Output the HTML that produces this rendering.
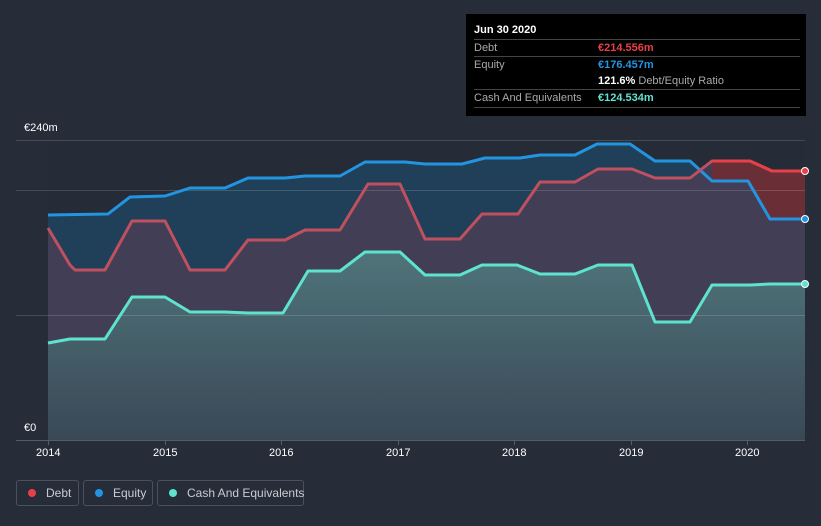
<!DOCTYPE html><html><head><meta charset="utf-8"><style>
body{margin:0;width:821px;height:526px;background:#262c38;font-family:"Liberation Sans",sans-serif;overflow:hidden;position:relative}
.tt{position:absolute;left:466px;top:14px;width:340px;height:102px;background:#000;color:#fff;font-size:11px}
.tt .r{position:absolute;left:8px;right:6px;border-top:1px solid #444;height:17px;line-height:17px;color:#aaa}
.tt .v{position:absolute;left:124px;font-weight:bold}
.lg{position:absolute;top:480px;height:26px;border:1px solid #4a505c;border-radius:3px;color:#c8ccd2;font-size:12px;line-height:24px;box-sizing:border-box;white-space:nowrap}
.lg i{display:inline-block;width:8px;height:8px;border-radius:50%;margin:0 10px 0 11px}
.ax{position:absolute;color:#fff;font-size:11px}
</style></head><body>
<svg width="821" height="526" style="position:absolute;left:0;top:0">
<defs><linearGradient id="cg" x1="0" y1="0" x2="0" y2="1"><stop offset="0" stop-color="#4f747a"/><stop offset="1" stop-color="#3a4856"/></linearGradient></defs>
<rect x="48" y="140" width="757" height="300" fill="#252b37"/>
<path d="M48,215 L108,214 130,197 165,196 190,188 225,188 248,178 285,178 305,176 340,176 365,162 405,162 425,164 462,164 485,158 520,158 540,155 575,155 597,144 630,144 655,161 690,161 712,181 748,181 770,219 805,219 L805,440 48,440Z" fill="#1f4058"/>
<path d="M48,228 L70,265 75,270 105,270 132,221 165,221 190,270 225,270 248,240 285,240 305,230 340,230 368,184 400,184 425,239 460,239 482,214 518,214 540,182 575,182 598,169 632,169 655,178 690,178 712,161 750,161 772,171 805,171 L805,440 48,440Z" fill="#463e55" opacity="0.9"/>
<path d="M712,161 750,161 772,171 805,171 805,219 770,219 748,181 712,181Z" fill="#6a2e36"/>
<path d="M48,343 L70,339 105,339 132,297 165,297 190,312 225,312 248,313 283,313 308,271 340,271 365,252 400,252 425,275 460,275 482,265 517,265 540,274 575,274 598,265 632,265 655,322 690,322 712,285 750,285 770,284 805,284 L805,440 48,440Z" fill="url(#cg)"/>
<g stroke="#fff" stroke-opacity="0.15"><line x1="16" y1="140.5" x2="805" y2="140.5"/><line x1="16" y1="190.5" x2="805" y2="190.5"/><line x1="16" y1="315.5" x2="805" y2="315.5"/></g>
<line x1="16" y1="440.5" x2="805" y2="440.5" stroke="#555c68"/>
<g fill="none" stroke-width="3" stroke-linejoin="round">
<path d="M48,215 L108,214 130,197 165,196 190,188 225,188 248,178 285,178 305,176 340,176 365,162 405,162 425,164 462,164 485,158 520,158 540,155 575,155 597,144 630,144 655,161 690,161 712,181 748,181 770,219 805,219" stroke="#2394e0"/>
<path d="M48,228 L70,265 75,270 105,270 132,221 165,221 190,270 225,270 248,240 285,240 305,230 340,230 368,184 400,184 425,239 460,239 482,214 518,214 540,182 575,182 598,169 632,169 655,178 690,178 712,161 750,161 772,171 805,171" stroke="#c0505f"/>
<path d="M712,161 750,161 772,171 805,171" stroke="#e84048"/>
<path d="M48,343 L70,339 105,339 132,297 165,297 190,312 225,312 248,313 283,313 308,271 340,271 365,252 400,252 425,275 460,275 482,265 517,265 540,274 575,274 598,265 632,265 655,322 690,322 712,285 750,285 770,284 805,284" stroke="#5ee3cf"/>
</g>
<circle cx="805" cy="171" r="3.5" fill="#e84048" stroke="#fff"/>
<circle cx="805" cy="219" r="3.5" fill="#2394e0" stroke="#fff"/>
<circle cx="805" cy="284" r="3.5" fill="#5ee3cf" stroke="#fff"/>
<g stroke="#555c68"><line x1="48.5" y1="440" x2="48.5" y2="445"/><line x1="165.5" y1="440" x2="165.5" y2="445"/><line x1="281.5" y1="440" x2="281.5" y2="445"/><line x1="398.5" y1="440" x2="398.5" y2="445"/><line x1="514.5" y1="440" x2="514.5" y2="445"/><line x1="631.5" y1="440" x2="631.5" y2="445"/><line x1="747.5" y1="440" x2="747.5" y2="445"/></g>
</svg>
<div class="ax" style="left:24px;top:122px">€240m</div>
<div class="ax" style="left:24px;top:422px">€0</div>
<div class="ax" style="left:36px;top:447px">2014</div>
<div class="ax" style="left:153px;top:447px">2015</div>
<div class="ax" style="left:269px;top:447px">2016</div>
<div class="ax" style="left:386px;top:447px">2017</div>
<div class="ax" style="left:502px;top:447px">2018</div>
<div class="ax" style="left:619px;top:447px">2019</div>
<div class="ax" style="left:735px;top:447px">2020</div>
<div class="tt">
<div style="position:absolute;left:8px;top:10px;font-weight:bold">Jun 30 2020</div>
<div class="r" style="top:25px">Debt<span class="v" style="color:#e84048;left:124px">€214.556m</span></div>
<div class="r" style="top:42px">Equity<span class="v" style="color:#2394e0">€176.457m</span></div>
<div class="r" style="top:59px;border:0"><span class="v" style="color:#fff">121.6% <span style="color:#aaa;font-weight:normal">Debt/Equity Ratio</span></span></div>
<div class="r" style="top:75px">Cash And Equivalents<span class="v" style="color:#5ee3cf">€124.534m</span></div>
<div class="r" style="top:93px;height:0"></div>
</div>
<div class="lg" style="left:16px;width:63px"><i style="background:#e84048"></i>Debt</div>
<div class="lg" style="left:83px;width:70px"><i style="background:#2394e0"></i>Equity</div>
<div class="lg" style="left:157px;width:147px"><i style="background:#5ee3cf"></i>Cash And Equivalents</div>
</body></html>
